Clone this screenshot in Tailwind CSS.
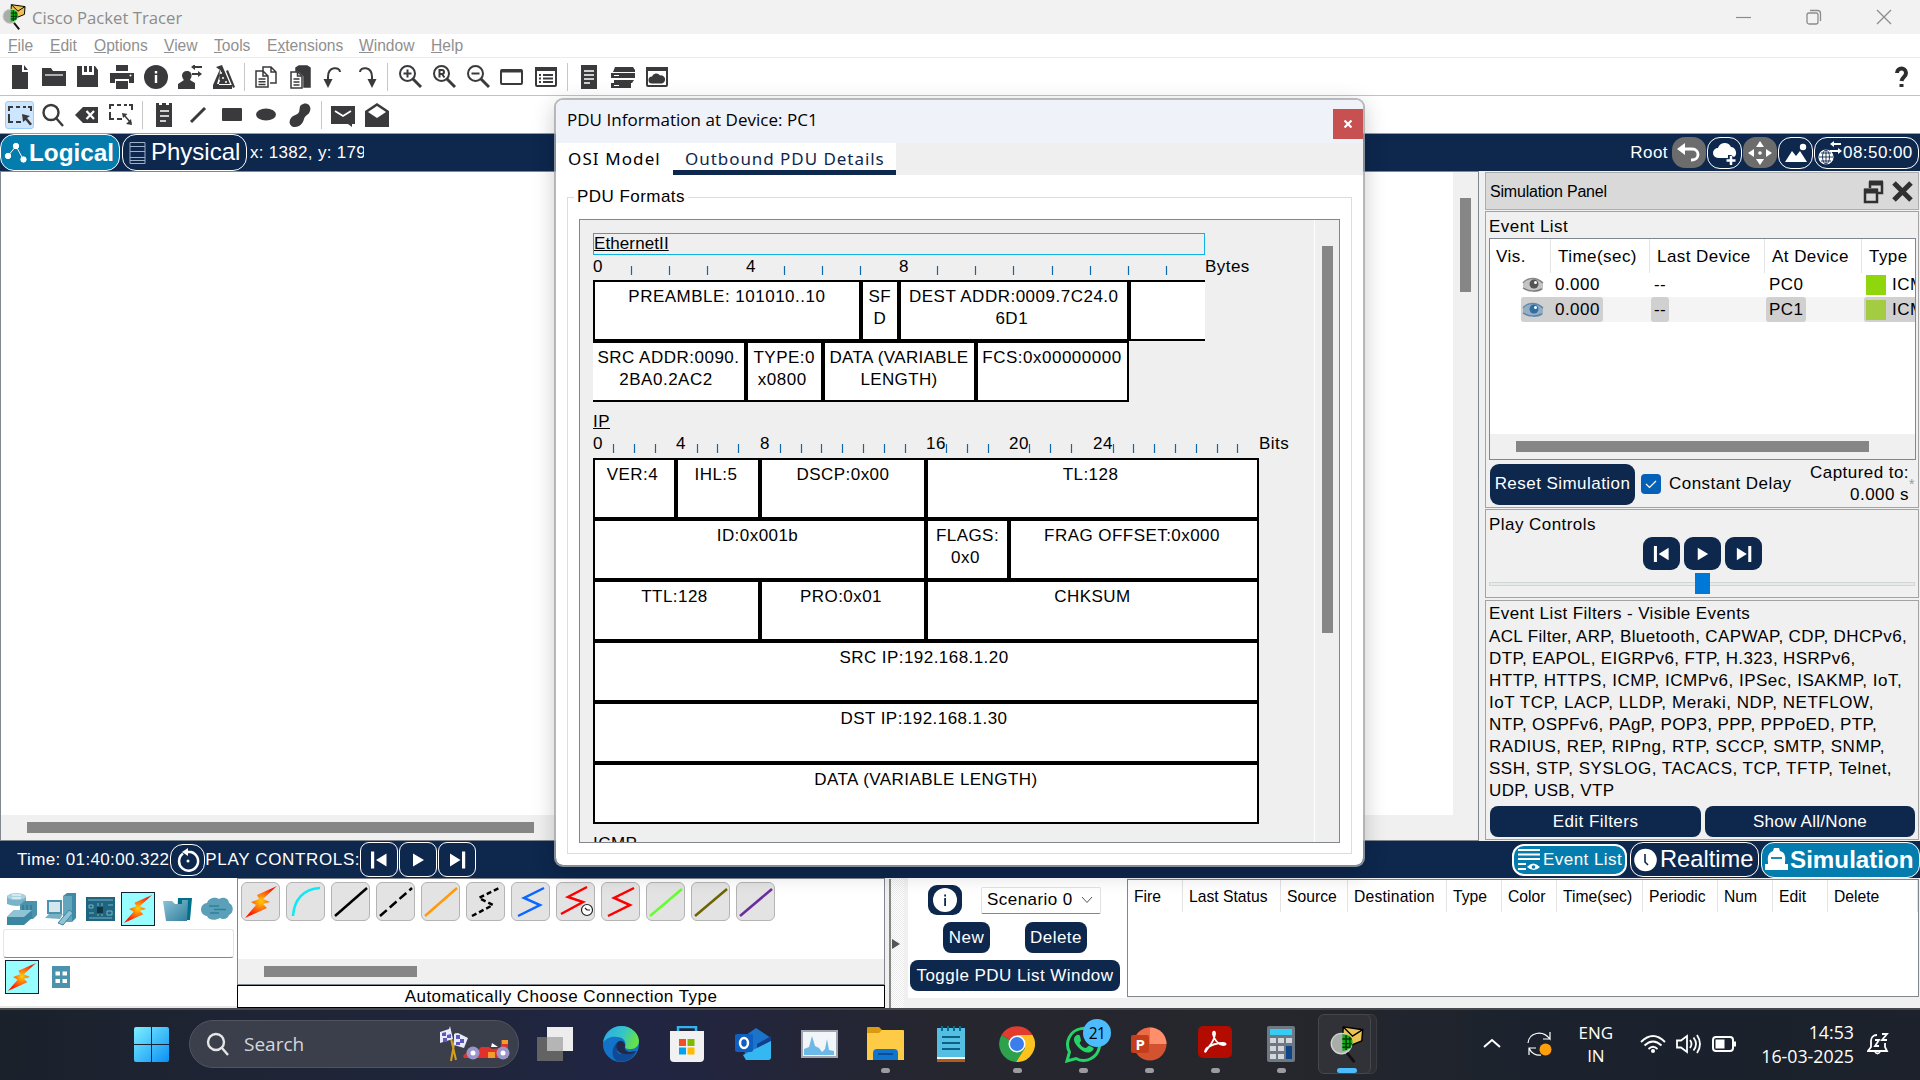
<!DOCTYPE html>
<html lang="en">
<head>
<meta charset="utf-8">
<title>Cisco Packet Tracer</title>
<script src="https://cdn.jsdelivr.net/npm/@tailwindcss/browser@4"></script>
</head>
<body class="relative flex h-[1080px] w-[1920px] flex-col overflow-hidden bg-[#f0f0f0] font-['Liberation_Sans',Arial,sans-serif] text-[17px] leading-[22px] tracking-[0.45px] text-black">

<!-- shared symbols -->
<svg class="absolute size-0">
  <defs>
    <radialGradient id="boltg" cx=".5" cy=".48" r=".5"><stop offset="0" stop-color="#ffd400"/><stop offset=".35" stop-color="#ff8a10"/><stop offset="1" stop-color="#ff1a00"/></radialGradient>
    <linearGradient id="dev" x1="0" y1="0" x2="1" y2="1"><stop offset="0" stop-color="#8fc3d6"/><stop offset="1" stop-color="#2f7f9c"/></linearGradient>
    <symbol id="bolt" viewBox="0 0 34 34"><path d="M33 1 19 14l7 3-7 2 4 4L1 33 12 20 7 17l8-3-2-4z" fill="url(#boltg)"/></symbol>
    <symbol id="prev" viewBox="0 0 20 20"><path d="M2 1.500h3.200v17H2zM17.500 3.500v13L7 10z"/></symbol>
    <symbol id="play" viewBox="0 0 20 20"><path d="M5 3.500v13L16 10z"/></symbol>
    <symbol id="next" viewBox="0 0 20 20"><path d="M15 1.500h3.200v17H15zM3 3.500v13L13.500 10z"/></symbol>
    <symbol id="tracer" viewBox="0 0 36 40"><path d="m14 1 21 3-1 12-12 5-9-6z" fill="#ecc255" stroke="#000" stroke-width="1.500"/><path d="m14 1 10 10 11-7" fill="none" stroke="#000" stroke-width="1.500"/><circle cx="12" cy="19" r="11" fill="#a9ada8" stroke="#cfd2ce" stroke-width="1.500"/><path d="M13 9c7 0 11 3 11 9 0 4-4 8-11 9z" fill="#0bb013"/><path d="M17 10v16M21 12v12M13 14h10M13 19h10M13 23h8" stroke="#04360a" stroke-width="1.500"/><path d="m18 29 8 10" stroke="#111" stroke-width="3"/></symbol>
    <symbol id="eye" viewBox="0 0 22 16"><path d="M1 7C6 1 15 0 21 6v6c-6 3-14 3-20-1z" fill="currentColor" opacity=".35"/><path d="M1 6C6 0 15 0 21 6M1 11c6 4 14 4 19 1" fill="none" stroke="currentColor" stroke-width="1.500" opacity=".7"/><circle cx="12" cy="7" r="4.500" fill="currentColor"/><circle cx="13.500" cy="5.500" r="1.500" fill="#fff"/></symbol>
  </defs>
</svg>

<!-- title bar -->
<header class="flex h-[34px] shrink-0 items-center bg-[#f2f2f2] pl-[2px] font-['Open_Sans',sans-serif] text-[#8c8c8c]">
  <svg class="h-[26px] w-[24px]"><use href="#tracer"/></svg>
  <span class="ml-[6px] pt-[2px] text-[16.700px] tracking-normal">Cisco Packet Tracer</span>
  <div class="ml-auto flex items-center gap-[54px] pr-[28px]">
    <svg class="size-4" fill="none" stroke="#8c8c8c" stroke-width="1.200"><path d="M0 8.500h15"/></svg>
    <svg class="size-4" fill="none" stroke="#8c8c8c" stroke-width="1.300"><rect x="1" y="4" width="11" height="11" rx="2"/><path d="M4 1.500h7.500a3 3 0 0 1 3 3V12"/></svg>
    <svg class="size-4" fill="none" stroke="#8c8c8c" stroke-width="1.300"><path d="m1 1 14 14M15 1 1 15"/></svg>
  </div>
</header>

<!-- menu bar -->
<nav class="grid h-6 shrink-0 grid-cols-[42px_44px_70px_50px_53px_92px_72px_60px] items-center border-b border-[#ececec] bg-white pt-px pl-2 text-[15.600px] tracking-normal text-[#8f8f8f]">
  <span><u>F</u>ile</span><span><u>E</u>dit</span><span><u>O</u>ptions</span><span><u>V</u>iew</span><span><u>T</u>ools</span><span>E<u>x</u>tensions</span><span><u>W</u>indow</span><span><u>H</u>elp</span>
</nav>

<!-- main toolbar -->
<div class="flex h-[38px] shrink-0 items-center border-b border-[#c2c2c2] bg-white pt-px pr-[2px] pl-[3px] text-[#3a3a3c]">
  <div class="flex h-7 items-center border-r border-[#c8c8c8] pr-[3px] [&>svg]:mx-[5px] [&>svg]:size-6">
    <svg fill="currentColor"><path d="M4 0h10v7h6v17H4zM16 0l4 5h-4z"/></svg>
    <svg fill="currentColor"><path d="M0 3h9l2 3h13v2H0zM0 8h24v13H0z"/><path d="M3 10h18" stroke="#fff" stroke-width="1.200"/></svg>
    <svg fill="currentColor"><path d="M1 1h5v9h12V1h1l3 4v17H1zM8 1h3v6H8zM13 1h3v6h-3z"/></svg>
    <svg fill="currentColor"><path d="M6 0h12v6H6zM0 8h24v10h-5v-4H5v4H0zM6 16h12v8H6z"/><circle cx="20.500" cy="10.500" r="1" fill="#fff"/></svg>
    <svg fill="currentColor"><circle cx="12" cy="12" r="12"/><path d="M10.800 10h2.400v8h-2.400zM10.800 6h2.400v2.400h-2.400z" fill="#fff"/></svg>
    <svg fill="currentColor"><path d="M9 6c3.500 0 5 2.500 4.500 5.500-.3 2-1.500 3-1.500 3.500l5 3v6H0v-5l6-4s-2-2-2-4.500C4 8 6 6 9 6zM16 1h8v2h-8zM14 8h8v2h-8z"/><path d="m13 2 4-3v6zM24 9l-4-3v6z"/></svg>
    <svg fill="currentColor"><path d="m4 2 6-2 8 19H5L9 6zM1 20h19v4H1zM8 4 1 20h6z"/><path d="m14 6 2-1 7 17-2 1z"/><g fill="#fff"><circle cx="9" cy="8" r="1"/><circle cx="11" cy="13" r="1"/><circle cx="7" cy="16" r="1"/><circle cx="14" cy="17" r="1"/></g></svg>
  </div>
  <div class="ml-[4px] flex h-7 items-center border-r border-[#c8c8c8] pr-[2px] [&>svg]:mx-[5px] [&>svg]:size-6">
    <svg fill="none" stroke="currentColor" stroke-width="1.500"><path d="M9 6V2h8l5 5v11h-6M17 2v5h5"/><path d="M2 6h7l5 5v11H2zM9 6v5h5M4.500 14h7M4.500 16.700h7M4.500 19.500h7"/></svg>
    <svg fill="none" stroke="currentColor" stroke-width="1.500"><path d="M8 6V3l3-2h8l3 2v19h-6V11l-5-5z" fill="currentColor"/><path d="M3 7h7l4 4v12H3z" fill="#fff"/><path d="M9.500 7v4H14M5.500 14h6M5.500 17h6M5.500 20h6"/></svg>
    <svg fill="none" stroke="currentColor" stroke-width="2"><path d="M18 7c0-5.500-12-6-12 5v5"/><path d="M1.500 14h9L6 23z" fill="currentColor" stroke="none"/></svg>
    <svg fill="none" stroke="currentColor" stroke-width="2"><path d="M4 7c0-5.500 12-6 12 5v5"/><path d="M11.500 14h9L16 23z" fill="currentColor" stroke="none"/></svg>
  </div>
  <div class="ml-[5px] flex h-7 items-center border-r border-[#c8c8c8] pr-[4px] [&>svg]:mx-[5px] [&>svg]:size-6">
    <svg fill="none" stroke="currentColor" stroke-width="2"><circle cx="9.500" cy="8.500" r="7.500"/><path d="M5.500 8.500h8M9.500 4.500v8"/><path d="m15 14 8 8" stroke-width="3"/></svg>
    <svg fill="none" stroke="currentColor" stroke-width="2"><circle cx="9.500" cy="8.500" r="7.500"/><path d="M7.500 12.500V5H10a2 2 0 0 1 0 4H7.500M10 9l2.500 3.500"/><path d="m15 14 8 8" stroke-width="3"/></svg>
    <svg fill="none" stroke="currentColor" stroke-width="2"><circle cx="9.500" cy="8.500" r="7.500"/><path d="M5.500 8.500h8"/><path d="m15 14 8 8" stroke-width="3"/></svg>
    <svg fill="none" stroke="currentColor" stroke-width="2"><rect x="1" y="5" width="21" height="14" rx="1"/><path d="M1 6h21" stroke-width="3"/></svg>
    <svg fill="none" stroke="currentColor" stroke-width="2"><rect x="2" y="3" width="20" height="18" rx="1"/><path d="M1 4h22" stroke-width="4"/><path d="M9 10h10M9 13.500h10M9 17h10M5 10h2M5 13.500h2M5 17h2"/></svg>
  </div>
  <div class="ml-[4px] flex h-7 items-center [&>svg]:mx-[5px] [&>svg]:size-6">
    <svg fill="currentColor"><path d="M4 0h16v24H4z"/><path d="M7 6h10M7 10h10M7 14h10M7 18h6" stroke="#fff" stroke-width="1.500"/></svg>
    <svg fill="currentColor"><path d="M4 2h18l2 3v2H2zM0 8h24v5H0zM3 15h20l-2 3H3zM0 18h20v5H0z"/><path d="M3 10.500h5M3 20.500h5" stroke="#fff"/></svg>
    <svg fill="none" stroke="currentColor" stroke-width="2"><rect x="2" y="3" width="20" height="18" rx="1"/><path d="M1 4h22" stroke-width="4"/><path d="M7 18.500a3.500 3.500 0 0 1 0-7 4.500 4.500 0 0 1 8-1 4 4 0 0 1 2 8z" fill="currentColor" stroke="none"/></svg>
  </div>
  <svg class="mr-[4px] ml-auto h-[24px] w-[26px]" fill="none" stroke="#2d2d2f" stroke-width="4"><path d="M9 8c0-6 9-6 9 0 0 4-4 4-4.500 8"/><path d="M11.500 19h4v3h-4z" fill="#2d2d2f" stroke="none"/></svg>
</div>

<!-- drawing toolbar -->
<div class="flex h-[38px] shrink-0 items-center border-b border-[#9c9c9c] bg-white px-[2px] pt-px text-[#3a3a3c]">
  <div class="flex h-7 items-center border-r border-[#c8c8c8] pr-1">
    <div class="mr-[2px] ml-[3px] grid h-7 w-[29px] place-items-center rounded-[3px] border border-[#99cffb] bg-[#cce6ff]"><svg class="size-6" fill="none" stroke="currentColor" stroke-width="2"><path d="M1 8V4h4M8 4h4M15 4h3M20 4h3v4M1 11v8h4M8 19h5"/><path d="m14 11 8 2-3 2 5 6-2 1.500-4.500-5.500L15 19z" fill="currentColor" stroke="none"/></svg></div>
    <svg class="mx-[5px] size-6" fill="none" stroke="currentColor" stroke-width="2.400"><circle cx="10" cy="9.500" r="7.500"/><path d="m15 15 7 8"/></svg>
    <svg class="mx-[5px] size-6" fill="currentColor"><path d="m0 12 8-8h15v16H8z"/><path d="m11.500 8 7.500 8M19 8l-7.500 8" stroke="#fff" stroke-width="2.200"/></svg>
    <svg class="mx-[5px] size-6" fill="none" stroke="currentColor" stroke-width="2"><path d="M1 6V2h4M8 2h4M15 2h3M20 2h3v5M1 9v7h4M8 16h5"/><path d="M15 12l7 8" stroke-width="1.500"/><path d="M23 22l-6-1 5-5zM13 10l5.500 1-4.500 4z" fill="currentColor" stroke="none"/></svg>
  </div>
  <div class="ml-[4px] flex h-7 items-center border-r border-[#c8c8c8] pr-1 [&>svg]:mx-[5px] [&>svg]:size-6">
    <svg fill="currentColor"><path d="M4 0h3v2h3V0h4v2h3V0h3v24H4z"/><path d="M8 8h9M8 13h9M8 18h6" stroke="#fff" stroke-width="1.500"/></svg>
    <svg stroke="currentColor" stroke-width="3"><path d="M5 19 19 5"/></svg>
    <svg fill="currentColor"><rect x="2" y="5" width="20" height="13" rx="1"/></svg>
    <svg fill="currentColor"><ellipse cx="12" cy="11.500" rx="10" ry="6"/></svg>
    <svg fill="currentColor"><path d="M13 2c5-4 11 0 9 6-1 4-5 4-6 8s-4 8-9 8-7-5-4-9c3-4 6-2 8-6 1-2 0-5 2-7z"/></svg>
  </div>
  <div class="ml-[4px] flex h-7 items-center [&>svg]:mx-[5px] [&>svg]:size-6">
    <svg fill="currentColor"><path d="M0 3h24v18h-3v3l-4-3H0z"/><path d="m4 8 8 5 8-5" fill="none" stroke="#fff" stroke-width="1.800"/></svg>
    <svg fill="currentColor"><path d="m12 0 12 8v16H0V8z"/><path d="m12 3 9 6-9 6-9-6z" fill="#fff"/></svg>
  </div>
</div>

<!-- view switch bar -->
<div class="flex h-[37px] shrink-0 items-center bg-[#0d274d] text-white">
  <div class="flex h-[37px] w-[120px] items-center rounded-[14px] border border-white bg-[#047dae] pl-[3px]">
    <svg class="h-6 w-[25px]" fill="#fff" stroke="#fff"><path d="M4 15 12 5l7 13" fill="none"/><circle cx="4" cy="15" r="2.700"/><circle cx="12" cy="5" r="2.700"/><circle cx="19.500" cy="18.500" r="2.700"/></svg>
    <span class="text-[24.300px] leading-8 font-bold tracking-normal">Logical</span>
  </div>
  <div class="ml-[2px] flex h-[37px] w-[125px] items-center rounded-[14px] border border-white pl-[6px]">
    <svg class="h-6 w-[18px]" fill="none" stroke="#9fb0c8"><path d="M1 1.500h15v21H1zM1 5.500h15M1 10.500h15M1 16.500h15M1 19.500h15"/></svg>
    <span class="ml-[4px] -mt-px text-[24px] leading-8 tracking-normal">Physical</span>
  </div>
  <span class="ml-[3px] w-[114px] overflow-hidden text-[17px] tracking-[0.300px] whitespace-nowrap">x: 1382, y: 179</span>
  <div class="ml-auto flex items-center gap-px pr-px">
    <span class="mr-[3px]">Root</span>
    <div class="grid h-[31px] w-[34px] place-items-center rounded-[13px] bg-[#6c6c6c]"><svg class="size-6" fill="none" stroke="#fff" stroke-width="2.800"><path d="M4 8h11c8 0 8 11 0 11h-1"/><path d="m0 8 8-6v12z" fill="#fff" stroke="none"/></svg></div>
    <div class="grid h-[32px] w-[35px] place-items-center rounded-[13px] border border-white"><svg class="size-6" fill="#fff"><path d="M5 17a5 5 0 0 1 0-10 7 7 0 0 1 13-1c5 0 7 8 3 10l-3-2h-3v3z"/><path d="M18 15v9M13.500 19.500h9" stroke="#fff" stroke-width="2.500"/></svg></div>
    <div class="grid h-[31px] w-[34px] place-items-center rounded-[13px] bg-[#6c6c6c]"><svg class="size-6" fill="#fff"><path d="m12 0 4 6H8zM12 24l4-6H8zM0 12l6-4v8zM24 12l-6-4v8z"/><circle cx="12" cy="12" r="1.800"/></svg></div>
    <div class="grid h-[32px] w-[35px] place-items-center rounded-[13px] border border-white"><svg class="size-6" fill="#fff"><path d="m1 21 7-11 4 5 4-5 7 11z"/><circle cx="19" cy="6" r="3.200"/></svg></div>
    <div class="flex h-[32px] w-[105px] items-center rounded-[13px] border border-white pl-[3px]"><svg class="h-[26px] w-[25px]" fill="none" stroke="#fff" stroke-width="1.200"><circle cx="8" cy="17" r="7" fill="#fff"/><g stroke="#0d274d" stroke-width=".9"><path d="M1 17h14M3 13h10M3 21h10M8 10v14"/><ellipse cx="8" cy="17" rx="3.500" ry="7"/></g><path d="M14 4h9M12 11h9" stroke-width="2"/><path d="m12 4 4-3v6zM24 11l-4-3v6z" fill="#fff" stroke="none"/></svg><span>08:50:00</span></div>
  </div>
</div>

<!-- workspace and simulation panel -->
<main class="flex h-[670px] shrink-0">
  <section class="grid w-[1479px] grid-cols-[1fr_25px] grid-rows-[1fr_25px] border border-[#82868f] bg-white">
    <div></div>
    <div class="bg-[#f0f0f0] pt-[26px] pl-[7px]"><div class="h-[94px] w-[11px] bg-[#868686]"></div></div>
    <div class="bg-[#f0f0f0] pt-[7px] pl-[26px]"><div class="h-[11px] w-[507px] bg-[#868686]"></div></div>
    <div class="bg-[#f0f0f0]"></div>
  </section>

  <aside class="ml-[6px] flex w-[434px] flex-col pt-px">
    <div class="flex h-[38px] shrink-0 items-center border border-[#adadad] bg-[#d9d9d9] pt-px pl-1 text-[16px] tracking-[-0.200px]">Simulation Panel
      <svg class="ml-auto size-6" fill="none" stroke="#303032" stroke-width="2.500"><path d="M8 8V3h12v10h-4"/><path d="M7 3h14" stroke-width="5"/><path d="M3 10h12v12H3z"/><path d="M2 11h14" stroke-width="5"/></svg>
      <svg class="mr-[5px] ml-[6px] size-[21px]" stroke="#303032" stroke-width="5"><path d="m2 2 17 17M19 2 2 19"/></svg>
    </div>

    <!-- event list -->
    <div class="mt-px h-[297px] shrink-0 border border-[#a3a3a3] px-[3px]">
      <div class="flex h-[26px] items-center pt-[3px]">Event List</div>
      <div class="h-[222px] w-[427px] overflow-hidden border border-[#82868f] bg-white">
        <div class="grid h-[34px] w-[440px] grid-cols-[61px_99px_115px_97px_67px] [&>span]:border-r [&>span]:border-[#e3e3e3] [&>span]:pt-[7px] [&>span]:pl-[7px]"><span class="pl-[6px]!">Vis.</span><span>Time(sec)</span><span>Last Device</span><span>At Device</span><span>Type</span></div>
        <div class="grid h-[24px] w-[440px] grid-cols-[62px_99px_115px_97px_67px] items-center [&>span]:pl-[3px]"><div class="pl-[32px]"><svg class="h-4 w-[22px] text-[#555]"><use href="#eye"/></svg></div><span>0.000</span><span>--</span><span>PC0</span><div class="flex items-center gap-[6px] pl-[3px]"><i class="size-5 shrink-0 bg-[#8fd60d]"></i>ICMP</div></div>
        <div class="grid h-[25px] w-[440px] grid-cols-[62px_99px_115px_97px_67px] items-center bg-[linear-gradient(90deg,#fff_31px,#f4f4f4_31px)]"><div class="ml-[31px] flex h-[25px] items-center rounded-l-[3px] bg-[#d0d0d0] pl-px"><svg class="h-4 w-[22px] text-[#2d6ea3]"><use href="#eye"/></svg></div><span class="justify-self-start rounded-r-[3px] bg-[#d0d0d0] px-[3px] py-[1.500px]">0.000</span><span class="w-[18px] rounded-[3px] bg-[#d0d0d0] py-[1.500px] pl-[3px]">--</span><span class="justify-self-start rounded-[3px] bg-[#d0d0d0] px-[3px] py-[1.500px]">PC1</span><div class="ml-px flex h-[25px] items-center gap-[6px] rounded-l-[3px] bg-[#d0d0d0] pl-[2px]"><i class="size-5 shrink-0 bg-[#a3cc43]"></i>ICMP</div></div>
        <div class="h-[112px]"></div>
        <div class="h-[26px] bg-[#f0f0f0] pt-[7px] pl-[26px]"><div class="h-[11px] w-[353px] bg-[#868686]"></div></div>
      </div>
      <div class="flex items-center pt-[2px] pl-px">
        <div class="grid h-[41px] w-[145px] place-items-center rounded-[9px] bg-[#0d274d] text-white">Reset Simulation</div>
        <svg class="ml-[6px] h-5 w-5 rounded-[4px] bg-[#0560b8]" fill="none" stroke="#fff" stroke-width="1.200"><path d="m5 10 3.500 3.500L15 7"/></svg>
        <span class="ml-[8px]">Constant Delay</span>
        <div class="ml-auto text-right">Captured to:<br>0.000 s</div><span class="w-[6px] text-[14px] text-[#999]">*</span>
      </div>
    </div>

    <!-- play controls -->
    <div class="mt-px h-[89px] shrink-0 border border-[#a3a3a3] px-[3px]">
      <div class="flex h-[27px] items-center pt-[3px]">Play Controls</div>
      <div class="flex justify-center gap-1 fill-white">
        <div class="grid h-[33px] w-[37px] place-items-center rounded-[9px] bg-[#0d274d]"><svg class="h-5 w-[19px]"><use href="#prev"/></svg></div>
        <div class="grid h-[33px] w-[37px] place-items-center rounded-[9px] bg-[#0d274d]"><svg class="h-5 w-[19px]"><use href="#play"/></svg></div>
        <div class="grid h-[33px] w-[37px] place-items-center rounded-[9px] bg-[#0d274d]"><svg class="h-5 w-[19px]"><use href="#next"/></svg></div>
      </div>
      <div class="mt-[3px] flex h-[21px] items-center"><div class="flex h-[4px] w-full items-center justify-center border border-[#d4d6d6] bg-[#e7eaea]"><div class="h-[21px] w-[15px] shrink-0 bg-[#0078d7]"></div></div></div>
    </div>

    <!-- filters -->
    <div class="mt-[2px] h-[240px] shrink-0 border border-[#a3a3a3] px-[3px]">
      <div class="flex h-[26px] items-center tracking-[0.400px]">Event List Filters - Visible Events</div>
      <p class="-mt-px tracking-[0.370px] whitespace-nowrap">ACL Filter, ARP, Bluetooth, CAPWAP, CDP, DHCPv6,<br>DTP, EAPOL, EIGRPv6, FTP, H.323, HSRPv6,<br><span class="tracking-[0.500px]">HTTP, HTTPS, ICMP, ICMPv6, IPSec, ISAKMP, IoT,</span><br><span class="tracking-[0.550px]">IoT TCP, LACP, LLDP, Meraki, NDP, NETFLOW,</span><br>NTP, OSPFv6, PAgP, POP3, PPP, PPPoED, PTP,<br><span class="tracking-[0.520px]">RADIUS, REP, RIPng, RTP, SCCP, SMTP, SNMP,</span><br><span class="tracking-[0.500px]">SSH, STP, SYSLOG, TACACS, TCP, TFTP, Telnet,</span><br>UDP, USB, VTP</p>
      <div class="mt-[4px] grid grid-cols-[211px_210px] gap-1 pl-px text-center text-white">
        <div class="h-[31px] rounded-[8px] bg-[#0d274d] pt-[5px]">Edit Filters</div>
        <div class="h-[31px] rounded-[8px] bg-[#0d274d] pt-[5px] tracking-[0.280px]">Show All/None</div>
      </div>
    </div>
  </aside>
</main>

<!-- time bar -->
<div class="flex h-[37px] shrink-0 items-center bg-[#0d274d] pl-[17px] text-white">
  <span class="tracking-[0.360px]">Time: 01:40:00.322</span>
  <div class="ml-px grid h-[32px] w-[35px] place-items-center rounded-[13px] border border-white"><svg class="size-6" fill="none" stroke="#fff" stroke-width="2.500"><path d="M7 5.500a9.500 9.500 0 1 0 8-1.500H9"/><path d="m6 4 6-4v8z" fill="#fff" stroke="none"/><circle cx="12" cy="13" r="1.500" fill="#fff" stroke="none"/></svg></div>
  <span class="tracking-[0.650px]">PLAY CONTROLS:</span>
  <div class="flex gap-px fill-white">
    <div class="grid h-[35px] w-[38px] place-items-center rounded-[9px] border border-white"><svg class="size-5"><use href="#prev"/></svg></div>
    <div class="grid h-[35px] w-[38px] place-items-center rounded-[9px] border border-white"><svg class="size-5"><use href="#play"/></svg></div>
    <div class="grid h-[35px] w-[38px] place-items-center rounded-[9px] border border-white"><svg class="size-5"><use href="#next"/></svg></div>
  </div>
  <div class="ml-auto flex items-center">
    <div class="flex h-[32px] w-[115px] items-center rounded-[12px] border-2 border-white bg-[#047dae] pl-[3px]"><svg class="h-[24px] w-[26px]" stroke="#fff" stroke-width="2"><path d="M1 2h22M1 6.500h22M1 11h22M1 16h8M1 21h8"/><path d="M10 19q6-7 13 0-6 6-13 0z" fill="#fff" stroke="none"/><circle cx="16.500" cy="19" r="1.800" fill="#047dae" stroke="none"/></svg><span>Event List</span></div>
    <div class="ml-[3px] flex h-[35px] w-[129px] items-center rounded-[13px] border border-white pl-[3px]"><svg class="h-6 w-[23px]"><circle cx="11.500" cy="12" r="11.300" fill="#fff"/><path d="M11 6v8l3 3" fill="none" stroke="#0d274d" stroke-width="1.600"/></svg><span class="-mt-px ml-[3px] text-[23.700px] leading-8 tracking-normal">Realtime</span></div>
    <div class="ml-[2px] flex h-[36px] w-[159px] items-center rounded-[13px] border border-white bg-[#047dae] pl-[3px]"><svg class="h-6 w-[24px]" fill="#fff"><path d="M3 14C2 7 5 4 8 3l1-3h5l1 3c4 1 6 4 5 11v4H3zM0 16h3v2h4v-2h4v2h3v-2h4v2h2v-2h3v6H0z"/><path d="M6 10h11" stroke="#047dae" stroke-width="1.800"/></svg><span class="ml-px text-[24.200px] leading-8 font-bold tracking-normal">Simulation</span></div>
  </div>
</div>

<!-- device box, connections, scenario -->
<footer class="flex h-[130px] shrink-0">
  <div class="w-[237px] border-b-2 border-[#e8e8e8] bg-white">
    <div class="mt-[13px] flex h-[36px] items-center pl-[6px]">
      <svg class="h-[34px] w-[33px]" viewBox="0 0 33 34"><path d="M1 4q8-5 19 0v8q-9 4-19 0z" fill="#79b3c8"/><ellipse cx="10.500" cy="4.500" rx="9.500" ry="3.500" fill="#a8d2df"/><path d="M6 3h9M6 6h9" stroke="#fff" stroke-width="1.200"/><path d="m14 13 4-4h13v14l-4 4H14z" fill="#4b93ad"/><path d="M17 13v11M21 13v11M25 13v11" stroke="#246c87"/><path d="m1 25 7-7h18v8l-8 7H1z" fill="#3b87a2"/><path d="m1 25 7-7h18l-8 7z" fill="#8fc3d6"/></svg>
      <svg class="ml-[6px] h-[34px] w-[32px]" viewBox="0 0 32 34"><path d="m18 4 4-3h9v25l-4 4h-9z" fill="#3f8aa5"/><path d="M18 4h9v26h-9z" fill="#62a5bc"/><path d="M3 9h13v12H3z" fill="#d5e7ee" stroke="#4b93ad" stroke-width="2"/><path d="m0 26 4-4h14l-3 5z" fill="#78b0c4"/><path d="m13 31 11-13 4 3-10 12z" fill="#8fc3d6" stroke="#3b87a2"/></svg>
      <svg class="ml-[9px] h-[24px] w-[29px]" viewBox="0 0 29 24"><path d="M0 0h29v24H0z" fill="#1f6580"/><path d="M2 3h25M3 8h4v3H3zM22 8h5M3 16h5M3 21h23M21 14h5v4h-5zM12 6v3M16 6v3M12 17v2M16 17v2" stroke="#76b4c6" fill="none"/><path d="M11 10h6v6h-6z" fill="#123542"/></svg>
      <svg class="ml-[6px] size-[34px] border border-[#123] bg-[#97fdff] p-px"><use href="#bolt"/></svg>
      <svg class="ml-[8px] h-[24px] w-[30px]" viewBox="0 0 30 24"><path d="M15 1h14l-2 22H14z" fill="#00708a"/><path d="M0 4h9l3 3h7V3h6l-1 21H3z" fill="url(#dev)"/></svg>
      <svg class="ml-[8px] h-[24px] w-[32px]" viewBox="0 0 32 24"><path d="M6 19c-8-1-8-12 0-13C8 0 15 0 18 2c5-3 10 0 10 4 5 2 5 10 0 12-1 4-6 5-9 3-5 3-12 2-13-2z" fill="#5ba0b8"/><path d="M8 9h10M13 12.500h12M9 16h9" stroke="#2f7f9c" stroke-width="1.500"/></svg>
    </div>
    <div class="mt-[2px] ml-[3px] h-[29px] w-[231px] rounded-[3px] border border-[#e6e6e6] border-b-[#868686]"></div>
    <div class="mt-[2px] flex items-center pl-[5px]">
      <svg class="size-[34px] border border-[#123] bg-[#97fdff] p-px"><use href="#bolt"/></svg>
      <svg class="ml-[13px] h-[22px] w-[18px]" viewBox="0 0 18 22"><path d="M0 0h18v22H0z" fill="#4b93ad"/><path d="M3.500 5.500H8V9.500H3.500zM10.500 5.500H15V9.500h-4.500zM3.500 13H8v4H3.500zM10.500 13H15v4h-4.500z" fill="#fff"/></svg>
    </div>
  </div>

  <div class="flex w-[648px] flex-col">
    <div class="flex h-[107px] flex-col border border-[#82868f] bg-white">
      <div class="flex gap-[6px] pt-[3px] pl-[3px] [&>svg]:h-[39px] [&>svg]:w-[39px] [&>svg]:rounded-[6px] [&>svg]:border [&>svg]:border-[#b4b4b4] [&>svg]:bg-[#e3e3e3]">
        <svg fill="none"><use href="#bolt" x="2" y="2" width="34" height="34"/></svg>
        <svg fill="none" stroke="#0ee9f8" stroke-width="2.500"><path d="M6 33C7 17 16 6 33 5"/></svg>
        <svg stroke="#000" stroke-width="2.500"><path d="M3 33 35 5"/></svg>
        <svg stroke="#000" stroke-width="2.500" stroke-dasharray="9 4"><path d="M3 33 35 5"/></svg>
        <svg stroke="#ff9a0a" stroke-width="2.500"><path d="M3 33 35 5"/></svg>
        <svg fill="none" stroke="#000" stroke-width="2.500" stroke-dasharray="5 3"><path d="M5 33 26 22 12 15 32 5"/></svg>
        <svg fill="none" stroke="#0a67ff" stroke-width="2.500"><path d="M6 33 28 22 12 15 32 5"/></svg>
        <svg fill="none" stroke="#f00" stroke-width="2.500"><path d="M4 31 26 19 11 14 30 4"/><circle cx="30" cy="27" r="5.500" fill="#fff" stroke="#222" stroke-width="1.200"/><path d="m28 25 2 2h3" stroke="#222" stroke-width="1.200"/></svg>
        <svg fill="none" stroke="#f00" stroke-width="2.500"><path d="M6 33 28 22 12 15 32 5"/></svg>
        <svg stroke="#64ff2e" stroke-width="2.500"><path d="M3 33 35 6"/></svg>
        <svg stroke="#6b6400" stroke-width="2.500"><path d="M3 33 35 6"/></svg>
        <svg stroke="#6a2c9e" stroke-width="2.500"><path d="M3 33 35 6"/></svg>
      </div>
      <div class="mt-auto h-[25px] bg-[#f0f0f0] pt-[7px] pl-[26px]"><div class="h-[11px] w-[153px] bg-[#868686]"></div></div>
    </div>
    <div class="h-[23px] border border-black bg-white text-center leading-[22px]">Automatically Choose Connection Type</div>
  </div>

  <div class="mt-px ml-[4px] flex w-[15px] items-center border-l-2 border-[#868686] bg-[repeating-conic-gradient(#fff_0_25%,#e9e9e9_0_50%)] bg-[size:2px_2px] pl-px"><svg class="h-[10px] w-2"><path d="m0 0 8 5-8 5z" fill="#555"/></svg></div>

  <div class="ml-[4px] h-[120px] w-[219px] bg-white pt-[7px]">
    <div class="flex items-center">
      <div class="ml-[20px] grid h-[30px] w-[34px] place-items-center rounded-[9px] bg-[#0d274d]"><svg class="size-6"><circle cx="12" cy="12" r="12" fill="#fff"/><path d="M11.200 10h1.800v8h-1.800zM11.200 6.500h1.800V8.500h-1.800z" fill="#0d274d"/></svg></div>
      <div class="ml-[19px] flex h-[27px] w-[120px] items-center justify-between rounded-[2px] border border-[#e2e2e2] border-b-[#868686] pr-[7px] pl-[5px]">Scenario 0<svg class="h-2 w-[12px]" fill="none" stroke="#555"><path d="m1 1 5 5.500L11 1"/></svg></div>
    </div>
    <div class="mt-[7px] flex text-white">
      <div class="ml-[35px] grid h-[31px] w-[47px] place-items-center rounded-[8px] bg-[#0d274d]">New</div>
      <div class="ml-[35px] grid h-[31px] w-[62px] place-items-center rounded-[8px] bg-[#0d274d]">Delete</div>
    </div>
    <div class="mt-[7px] ml-[2px] grid h-[31px] w-[210px] place-items-center rounded-[8px] bg-[#0d274d] whitespace-nowrap text-white">Toggle PDU List Window</div>
  </div>

  <div class="mt-px h-[118px] w-[792px] border border-[#82868f] bg-white">
    <div class="grid h-8 grid-cols-[55px_98px_67px_99px_55px_55px_86px_75px_55px_55px_90px] text-[15.700px] tracking-normal [&>span]:border-r [&>span]:border-[#e3e3e3] [&>span]:pt-[6px] [&>span]:pl-[6px]"><span>Fire</span><span>Last Status</span><span>Source</span><span class="tracking-[0.200px]">Destination</span><span>Type</span><span>Color</span><span>Time(sec)</span><span>Periodic</span><span>Num</span><span>Edit</span><span>Delete</span></div>
  </div>
</footer>

<!-- Windows taskbar -->
<div class="flex h-[72px] shrink-0 items-center border-t-2 border-[#46484e] bg-[linear-gradient(90deg,#1b212b_0,#1f2536_16%,#212543_33%,#25262f_48%,#26272c_66%,#1b222d_80%,#1c212b_100%)] pb-[2px] font-['Open_Sans',sans-serif] tracking-normal text-white">
  <svg class="ml-[134px] size-[35px]" viewBox="0 0 35 35"><defs><linearGradient id="win" x1="0" y1="0" x2="35" y2="35" gradientUnits="userSpaceOnUse"><stop offset="0" stop-color="#7df0ff"/><stop offset="1" stop-color="#0a8ff5"/></linearGradient></defs><path d="M2 0h15v17H0V2a2 2 0 0 1 2-2zM18 0h15a2 2 0 0 1 2 2v15H18zM0 18h17v17H2a2 2 0 0 1-2-2zM18 18h17v15a2 2 0 0 1-2 2H18z" fill="url(#win)"/></svg>
  <div class="ml-[20px] flex h-12 w-[330px] items-center rounded-full border border-[#50545f] bg-[#3b3f4c] pl-[16px] text-[19px] text-[#d6d7da]">
    <svg class="size-6" fill="none" stroke="#e6e6e6" stroke-width="2.400"><circle cx="10" cy="10" r="8"/><path d="m16 16 6 7"/></svg>
    <span class="ml-[14px]">Search</span>
    <svg class="mr-[8px] ml-auto h-[36px] w-[70px]" viewBox="0 0 70 36"><path d="m9 4 7 30M16 7l-5 28" stroke="#d2a21c" stroke-width="2"/><path d="m9 3 1-3 3 13-13 4V6z" fill="#e8e9fb"/><path d="m14 8 4-1 10 5-4 10-10-3z" fill="#e8e9fb"/><path d="M2 7l4-1v4H2zM7 9l4-1v4H7zM3 12h4v4H3zM16 9h4v4h-4zM20 13h4v4h-4zM16 16h4v3h-4z" fill="#5b5ab8"/><path d="M23 30q4-6 15-6l3-3h8l3 2 9-1v-8h7v18H24z" fill="#e0312d"/><path d="M62 14h6v4h-6zM48 26h7v6h-7z" fill="#f49b2a"/><path d="m52 17 6 4h-7z" fill="#fff"/><circle cx="33" cy="27" r="6.500" fill="#9a96c9"/><circle cx="33" cy="27" r="2.500" fill="#fff"/><circle cx="63" cy="27" r="6.500" fill="#9a96c9"/><circle cx="63" cy="27" r="2.500" fill="#fff"/></svg>
  </div>
  <div class="ml-[3px] flex h-full items-center [&_i]:absolute [&_i]:bottom-[5px] [&_i]:h-[5px] [&_i]:w-[9px] [&_i]:rounded-full [&_i]:bg-[#9b9ba0] [&>div]:relative [&>div]:flex [&>div]:h-full [&>div]:w-[66px] [&>div]:items-center [&>div]:justify-center">
    <div><svg class="h-[34px] w-[36px]"><path d="M0 10h26v24H0z" fill="#636363"/><path d="M10 0h26v24H10z" fill="#ededed"/><path d="M10 10h16v14H10z" fill="#b5b5b5"/></svg></div>
    <div><svg class="size-[36px]" viewBox="0 0 36 36"><defs><linearGradient id="ed" x1="0" y1="0" x2="1" y2=".3"><stop offset="0" stop-color="#2ea8e8"/><stop offset=".6" stop-color="#35c5c8"/><stop offset="1" stop-color="#64e04a"/></linearGradient></defs><circle cx="18" cy="18" r="18" fill="#1273c8"/><path d="M0 17C2 5 11 0 18 0c11 0 18 8 18 15 0 9-12 10-14 6 2-4-1-10-8-10C8 10 2 13 0 17z" fill="url(#ed)"/><path d="M22 21c-1 4 5 8 11 5-4 8-12 11-19 9-7-4-5-15 1-19-3 9 0 12 3 12z" fill="#114a94"/><path d="M14 17c3-5 9-1 8 4-1 2 1 4 4 5l8-1c-8 6-24 4-20-8z" fill="#20294a"/></svg></div>
    <div><svg class="h-[36px] w-[34px]" viewBox="0 0 34 36"><path d="M8 7V1h18v6" fill="none" stroke="#32b3ee" stroke-width="2.500"/><path d="M0 5h34v27a4 4 0 0 1-4 4H4a4 4 0 0 1-4-4z" fill="#f1f1f1"/><path d="M9 13h7v7H9z" fill="#f25022"/><path d="M17.500 13h7v7h-7z" fill="#7fba00"/><path d="M9 21.500h7v7H9z" fill="#00a4ef"/><path d="M17.500 21.500h7v7h-7z" fill="#ffb900"/></svg></div>
    <div><svg class="h-[32px] w-[37px]" viewBox="0 0 37 32"><path d="m7 10 14-10 15 10v19a3 3 0 0 1-3 3H11z" fill="#1a74cb"/><path d="m22 16 14-8v5L22 24z" fill="#153f8a"/><path d="m8 27 28-14v16a3 3 0 0 1-3 3H11z" fill="#35b8f1"/><rect y="6" width="18" height="18" rx="2" fill="#0f5fc0"/><ellipse cx="9" cy="15" rx="4" ry="5" fill="none" stroke="#fff" stroke-width="2.500"/></svg></div>
    <div><svg class="h-[28px] w-[37px]"><rect x="1" y="1" width="35" height="26" fill="#f3f6f9" stroke="#9fa6ad" stroke-width="2"/><path d="M3 25v-6l5-2 3-11 3 10 4 2 3 4 3-3 2-10 2 11 5 1v4z" fill="#6cb8e6"/></svg></div>
    <div><svg class="h-[34px] w-[37px]" viewBox="0 0 37 34"><path d="M0 1a1 1 0 0 1 1-1h11l4 4-3 6H0z" fill="#dc9a12"/><path d="M0 6h12l3-3h21a1 1 0 0 1 1 1v29H0z" fill="#fdcb45"/><path d="M6 33v-7a4 4 0 0 1 4-4h17a4 4 0 0 1 4 4v7z" fill="#0f75cf"/><path d="M11 27h15" stroke="#0a4d92" stroke-width="2"/></svg><i></i></div>
    <div><svg class="h-[36px] w-[28px]" viewBox="0 0 28 36"><path d="M0 2h28v32H0z" fill="#54bfe3"/><path d="M0 31h28v2H0z" fill="#fff"/><path d="M0 33h28v3H0z" fill="#b05a1c"/><path d="M5 0v5M11 0v5M17 0v5M23 0v5" stroke="#0a6d8c" stroke-width="2"/><path d="M5 11h18M5 17h18M5 23h18" stroke="#0a6183" stroke-width="2"/></svg></div>
    <div><svg class="size-[36px]" viewBox="0 0 36 36"><path d="M18 18 2.500 9a18 18 0 0 1 31 0z" fill="#e33b2e"/><path d="M18 18 2.500 9A18 18 0 0 0 17 36l9-14z" fill="#2da14c"/><path d="M18 9h15.500A18 18 0 0 1 17 36l9-14z" fill="#fcc31e"/><circle cx="18" cy="18" r="8.500" fill="#fff"/><circle cx="18" cy="18" r="7" fill="#3b7ded"/></svg><i></i></div>
    <div><svg class="size-[37px]" viewBox="0 0 37 37"><path d="M2 35 4.500 26A16 16 0 1 1 11 32.500z" fill="none" stroke="#25d366" stroke-width="3"/><path d="M12 9c4-1 3 3 4 5 0 2-2 2-1 4 2 3 4 4 6 4 2-1 2-3 4-2s5 2 3 4c-4 5-10 2-14-2s-8-10-2-13z" fill="#25d366"/></svg><i></i><span class="absolute top-[9px] left-[33px] flex h-[28px] w-[28px] items-center justify-center rounded-full bg-[#4cbcff] pb-px text-[15.500px] tracking-[-0.700px] text-black">21</span></div>
    <div><svg class="size-[36px]" viewBox="0 0 36 36"><circle cx="19" cy="18" r="16.500" fill="#d35230"/><path d="M19 1.500A16.500 16.500 0 0 1 35.500 18H19z" fill="#ff8f6b"/><path d="M19 1.500A16.500 16.500 0 0 0 3 18h16z" fill="#ed6c47"/><rect y="9" width="18" height="18" rx="2" fill="#c43e1c"/><text x="4.500" y="23.500" font-size="15" font-weight="bold" fill="#fff">P</text></svg><i></i></div>
    <div><svg class="mb-1 h-[32px] w-[34px]" viewBox="0 0 34 32"><rect width="34" height="32" rx="5" fill="#b30b00"/><path d="M8 25c2-4 8-8 9-17 .300-3-2-3-2 0 1 6 6 11 10 11 4 0 3-2 0-2-6 0-12 2-16 5-3 3-2 5-1 3z" fill="none" stroke="#fff" stroke-width="1.800"/></svg><i></i></div>
    <div><svg class="h-[36px] w-[28px]" viewBox="0 0 28 36"><rect width="28" height="36" rx="2" fill="#6d7883"/><path d="M3 3h22v6H3z" fill="#35cdf4"/><path d="M3 12h6v5H3zM11 12h6v5h-6zM19 12h6v5h-6zM3 20h6v5H3zM11 20h6v5h-6zM3 28h6v5H3zM11 28h6v5h-6z" fill="#d3d7dc"/><path d="M19 20h6v13h-6z" fill="#0f4487"/></svg><i></i></div>
    <div><span class="absolute top-[4px] left-[11px] h-[60px] w-[52px] rounded-[6px] border border-[#3b3c41] bg-[#2d2e34]"></span><span class="absolute top-[4px] left-[4px] h-[60px] w-[53px] rounded-[6px] border border-[#46474c] bg-[#313237]"></span><svg class="relative h-[37px] w-[34px]"><use href="#tracer"/></svg><i class="w-[20px]! bg-[#4cbcff]!"></i></div>
  </div>
  <div class="ml-auto flex items-center pr-[30px]">
    <svg class="h-[12px] w-[18px]" fill="none" stroke="#fff" stroke-width="2"><path d="m1 9 8-7 8 7"/></svg>
    <svg class="ml-[26px] h-[26px] w-[26px]" fill="none" stroke="#fff" stroke-width="1.200"><path d="M1 12C2 2 15-2 23 8V1m0 7h-7M2 24v-7h7m-7 0c2 5 7 8 12 7"/><circle cx="18.500" cy="18.500" r="6" fill="#ff9d0a" stroke="none"/></svg>
    <div class="ml-[26px] text-center text-[17px] leading-[23px]">ENG<br>IN</div>
    <svg class="ml-[27px] h-[20px] w-[26px]" fill="none" stroke="#fff" stroke-width="1.800"><path d="M1 8Q13-4 25 8M4.500 11.500q8.500-8 17 0M8.500 15q4.500-4.500 9 0"/><circle cx="13" cy="17" r="2" fill="#fff" stroke="none"/></svg>
    <svg class="ml-[10px] h-[20px] w-[26px]" fill="none" stroke="#fff" stroke-width="1.800"><path d="M1 6.500h4L11 2v16l-6-4.500H1zM14 6q3 4 0 8M17.500 3.500q5 6.500 0 13M21 1q6 9 0 18"/></svg>
    <svg class="ml-[10px] h-[18px] w-[26px]" fill="none" stroke="#fff" stroke-width="2"><rect x="1" y="2" width="20" height="14" rx="3"/><path d="M3.500 4.500h9v9h-9z" fill="#fff" stroke="none"/><path d="M23 6.500v5"/></svg>
    <div class="ml-[23px] text-right text-[17.800px] leading-[24px]">14:53<br>16-03-2025</div>
    <svg class="ml-[13px] h-[24px] w-[23px]" fill="none" stroke="#fff" stroke-width="1.800"><path d="M10 3C6 3 4 6 4 9v6l-3 4h19l-2-4v-4M8 20q2.500 3 5 0M8 8h4l-4 6h4M15 2h5l-5 6h5"/></svg>
  </div>
</div>

<!-- PDU dialog -->
<div class="absolute top-[98px] left-[554px] flex h-[769px] w-[811px] flex-col overflow-hidden rounded-[9px] border-2 border-[#a5a7ac]/80 bg-white bg-clip-padding shadow-[0_6px_22px_rgba(0,0,0,0.2)]">
  <div class="flex h-[43px] shrink-0 items-center bg-[#f0f2f9] pl-[11px] font-['Open_Sans',sans-serif] text-[17px] tracking-[0.030px]"><span class="-mt-[3px]">PDU Information at Device: PC1</span>
    <span class="mt-[4px] ml-auto grid h-[30px] w-[30px] place-items-center bg-[#c75050]"><svg class="size-[8px]" stroke="#fff" stroke-width="2.200"><path d="m.500.500 7 7M7.500.500l-7 7"/></svg></span>
  </div>
  <div class="flex h-[32px] shrink-0 bg-[#efefef] font-['Noto_Sans',sans-serif] leading-[32px]">
    <span class="w-[117px] bg-white pl-[12px] tracking-[1.100px]">OSI Model</span>
    <span class="w-[223px] border-b-[5px] border-[#0d274d] bg-white pl-[12px] tracking-[0.950px] text-[#0d274d]">Outbound PDU Details</span>
  </div>
  <fieldset class="mx-[11px] mt-[11px] mb-[11px] flex-1 border border-[#dcdcdc] px-[11px] pt-[11px]">
    <legend class="-ml-[5px] px-[3px]">PDU Formats</legend>
    <div class="flex h-[624px] overflow-hidden border border-[#82868f] bg-[#efefef]">
      <div class="w-[734px] pt-[13px] pl-[13px]">
        <div class="h-[22px] w-[612px] border border-[#10b4e4] leading-[20px] tracking-[0.100px]"><u>EthernetII</u></div>
        <div class="relative flex h-[25px] pt-px"><span class="w-[153px]">0</span><span class="w-[153px]">4</span><span class="w-[306px]">8</span><span>Bytes</span>
          <svg class="absolute top-[11px] left-0 h-[9px] w-[612px]" id="byteTicks" stroke="#0f69a8" stroke-width="1.200"></svg></div>
        <div class="grid w-[612px] grid-cols-16 [&>div]:h-[61px] [&>div]:border-2 [&>div]:border-black [&>div]:bg-white [&>div]:pt-[4px] [&>div]:text-center [&>div]:tracking-[0.500px] [&>div]:whitespace-nowrap">
          <div class="col-span-7">PREAMBLE: 101010..10</div><div>SF<br>D</div><div class="col-span-6">DEST ADDR:0009.7C24.0<br><span class="mr-[4px]">6D1</span></div><div class="col-span-2 border-r-0!"></div>
          <div class="col-span-4 border-l-0!">SRC ADDR:0090.<br><span class="mr-[5px]">2BA0.2AC2</span></div><div class="col-span-2">TYPE:0<br><span class="mr-[4px]">x0800</span></div><div class="col-span-4 tracking-[0.350px]!">DATA (VARIABLE<br>LENGTH)</div><div class="col-span-4">FCS:0x00000000</div>
        </div>
        <div class="mt-[9px] h-[22px]"><u>IP</u></div>
        <div class="relative flex h-[25px]"><span class="w-[83px]">0</span><span class="w-[84px]">4</span><span class="w-[166px]">8</span><span class="w-[83px]">16</span><span class="w-[84px]">20</span><span class="w-[166px]">24</span><span>Bits</span>
          <svg class="absolute top-[11px] left-0 h-[9px] w-[666px]" id="bitTicks" stroke="#0f69a8" stroke-width="1.200"></svg></div>
        <div class="grid w-[666px] grid-cols-[83px_84px_166px_83px_250px] [&>div]:h-[61px] [&>div]:border-2 [&>div]:border-black [&>div]:bg-white [&>div]:pt-[4px] [&>div]:pr-[4px] [&>div]:text-center">
          <div>VER:4</div><div>IHL:5</div><div class="pr-0!">DSCP:0x00</div><div class="col-span-2">TL:128</div>
          <div class="col-span-3">ID:0x001b</div><div class="pr-0!">FLAGS:<br><span class="mr-[4px]">0x0</span></div><div>FRAG OFFSET:0x000</div>
          <div class="col-span-2">TTL:128</div><div>PRO:0x01</div><div class="col-span-2 pr-0!">CHKSUM</div>
          <div class="col-span-5">SRC IP:192.168.1.20</div>
          <div class="col-span-5">DST IP:192.168.1.30</div>
          <div class="col-span-5 pr-0!">DATA (VARIABLE LENGTH)</div>
        </div>
        <div class="mt-[9px]"><u>ICMP</u></div>
      </div>
      <div class="flex-1 border-l border-white pt-[26px] pl-[7px]"><div class="h-[387px] w-[11px] bg-[#868686]"></div></div>
    </div>
  </fieldset>
</div>

<script>
// Minor ruler ticks between the numbered positions
function ticks(id, unit, total, skip) {
  let out = '';
  for (let i = 1; i < total; i++) if (!skip.includes(i)) out += '<path d="M' + (Math.floor(i * unit) + 0.5) + ' 0v9"/>';
  document.getElementById(id).innerHTML = out;
}
ticks('byteTicks', 38.25, 16, [4, 8]);
ticks('bitTicks', 20.8, 32, [4, 8, 16, 20, 24]);
</script>
</body>
</html>
